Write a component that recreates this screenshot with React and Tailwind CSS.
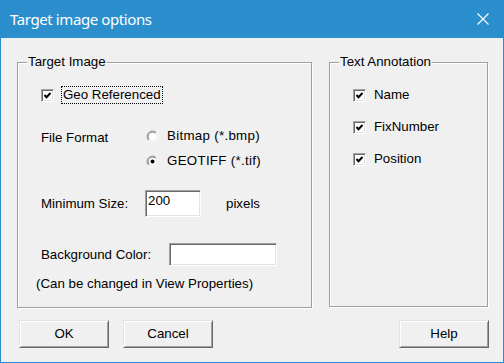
import React from 'react';

const Check = () => (
  <span className="w-[13px] h-[13px] shrink-0 bg-white border border-t-[#a0a0a0] border-l-[#a0a0a0] border-b-white border-r-white shadow-[inset_1px_1px_0_#696969,inset_-1px_-1px_0_#e3e3e3] flex items-center justify-center">
    <svg width="11" height="11" viewBox="0 0 11 11">
      <polyline points="2.5,5 4.5,7.2 8.5,3" fill="none" stroke="#000" strokeWidth="2" />
    </svg>
  </span>
);

const Radio = ({ checked }) => (
  <svg width="13" height="13" viewBox="0 0 13 13" className="shrink-0">
    <circle cx="6.5" cy="6.5" r="5.5" fill="#fff" />
    <path d="M2.6 10.4 A5.5 5.5 0 0 1 10.4 2.6" fill="none" stroke="#a0a0a0" strokeWidth="1" />
    <path d="M10.4 2.6 A5.5 5.5 0 0 1 2.6 10.4" fill="none" stroke="#ffffff" strokeWidth="1" />
    <path d="M3.3 9.7 A4.5 4.5 0 0 1 9.7 3.3" fill="none" stroke="#696969" strokeWidth="1" />
    <path d="M9.7 3.3 A4.5 4.5 0 0 1 3.3 9.7" fill="none" stroke="#e3e3e3" strokeWidth="1" />
    {checked && <circle cx="6.5" cy="6.5" r="2" fill="#000" />}
  </svg>
);

const Field = ({ className, children }) => (
  <div className={`bg-white border border-t-[#a0a0a0] border-l-[#a0a0a0] border-b-white border-r-white shadow-[inset_1px_1px_0_#696969,inset_-1px_-1px_0_#e3e3e3] ${className}`}>
    {children}
  </div>
);

const Group = ({ title, className, children }) => (
  <div className={`relative border border-[#a0a0a0] shadow-[inset_1px_1px_0_#fff,1px_1px_0_#fff] ${className}`}>
    <span className="absolute left-[9px] top-[-10px] px-[1px] bg-[#f0f0f0] leading-[18px]">{title}</span>
    {children}
  </div>
);

const Button = ({ children, className }) => (
  <button className={`h-[28px] w-[90px] bg-[#f0f0f0] border border-t-[#e3e3e3] border-l-[#e3e3e3] border-b-[#696969] border-r-[#696969] shadow-[inset_1px_1px_0_#fff,inset_-1px_-1px_0_#a0a0a0] flex items-center justify-center ${className}`}>
    {children}
  </button>
);

export default function App() {
  return (
    <div className="w-[504px] h-[363px] flex flex-col bg-[#f0f0f0] border-x border-b border-[#2b8fcd] text-[13.3px] text-black font-['Liberation_Sans',Arial,sans-serif] overflow-hidden">
      <div className="h-[38px] shrink-0 bg-[#2b8fcd] flex items-center pl-[9px] text-white text-[15px] font-['Noto_Sans',sans-serif]">
        <span className="leading-none tracking-[-0.4px]">Target image options</span>
        <svg width="12" height="12" viewBox="0 0 12 12" className="ml-auto mr-[14px]">
          <path d="M0.5 0.5 L11.5 11.5 M11.5 0.5 L0.5 11.5" stroke="#fff" strokeWidth="1.1" />
        </svg>
      </div>

      <div className="flex mt-[24px] ml-[16px]">
        <Group title="Target Image" className="w-[295px] h-[246px]">
          <div className="flex flex-col">
            <div className="mt-[23px] h-[18px] pl-[23px] flex items-center">
              <Check />
              <span className="ml-[7px] h-[18px] px-[1px] border border-dotted border-black flex items-center">Geo Referenced</span>
            </div>

            <div className="mt-[23px] pl-[23px] flex">
              <span className="w-[105px] mt-[2px] h-[18px] flex items-center">File Format</span>
              <div className="flex flex-col gap-[7px]">
                <div className="h-[18px] flex items-center">
                  <Radio />
                  <span className="ml-[8px] tracking-[0.3px]">Bitmap (*.bmp)</span>
                </div>
                <div className="h-[18px] flex items-center">
                  <Radio checked />
                  <span className="ml-[8px] tracking-[0.3px]">GEOTIFF (*.tif)</span>
                </div>
              </div>
            </div>

            <div className="mt-[20px] pl-[23px] flex items-center h-[27px]">
              <span className="w-[104px]">Minimum Size:</span>
              <Field className="w-[56px] h-[27px] pl-[2px] pt-[2px] leading-[16px]">200</Field>
              <span className="ml-[25px]">pixels</span>
            </div>

            <div className="mt-[26px] pl-[23px] flex items-center h-[23px]">
              <span className="w-[128px]">Background Color:</span>
              <Field className="w-[108px] h-[23px]" />
            </div>

            <div className="mt-[10px] pl-[18px] h-[16px] flex items-center">
              (Can be changed in View Properties)
            </div>
          </div>
        </Group>

        <Group title="Text Annotation" className="ml-[17px] w-[159px] h-[245px]">
          <div className="flex flex-col gap-[14px] pt-[23px] pl-[23px]">
            {['Name', 'FixNumber', 'Position'].map((t) => (
              <div key={t} className="h-[18px] flex items-center">
                <Check />
                <span className="ml-[8px]">{t}</span>
              </div>
            ))}
          </div>
        </Group>
      </div>

      <div className="flex mt-[12px] ml-[18px]">
        <Button>OK</Button>
        <Button className="ml-[14px]">Cancel</Button>
        <Button className="ml-[186px]">Help</Button>
      </div>
    </div>
  );
}
